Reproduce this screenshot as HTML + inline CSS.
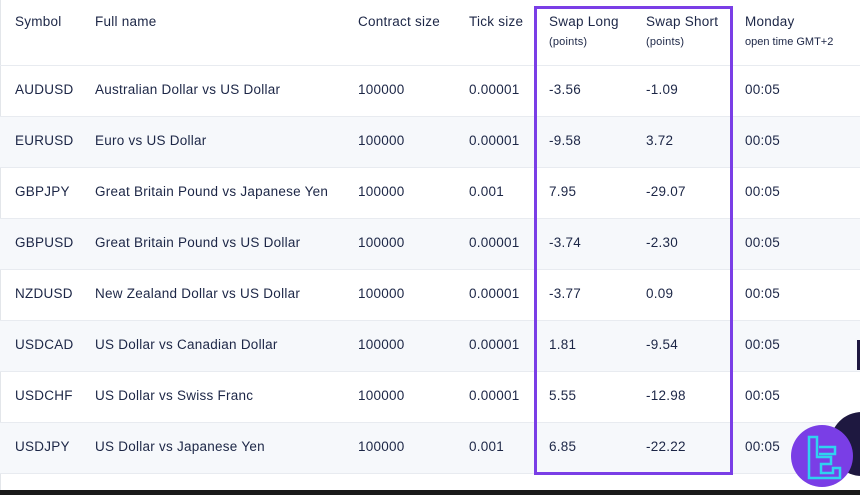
<!DOCTYPE html>
<html><head><style>
body{margin:0;width:860px;height:495px;overflow:hidden;background:#fff;font-family:"Liberation Sans",sans-serif;color:#1c2646;position:relative}
.r{position:absolute;left:0;width:860px;height:51px;border-top:1px solid #e8ebf0}
.r.a{background:#f6f8fb}
.t{position:absolute;font-size:13.5px;letter-spacing:0.25px;white-space:nowrap}
.s{font-size:11px;letter-spacing:0.2px}
</style></head><body>
<div style="position:absolute;left:0;top:0;width:1px;height:490px;background:#e3e6ea"></div>
<div class="t" style="left:15px;top:14px">Symbol</div>
<div class="t" style="left:95px;top:14px">Full name</div>
<div class="t" style="left:358px;top:14px">Contract size</div>
<div class="t" style="left:469px;top:14px">Tick size</div>
<div class="t" style="left:549px;top:14px">Swap Long</div>
<div class="t s" style="left:549px;top:36px">(points)</div>
<div class="t" style="left:646px;top:14px">Swap Short</div>
<div class="t s" style="left:646px;top:36px">(points)</div>
<div class="t" style="left:745px;top:14px">Monday</div>
<div class="t s" style="left:745px;top:36px;letter-spacing:0">open time GMT+2</div>
<div id="rows"></div>
<script>
var d=[["AUDUSD","Australian Dollar vs US Dollar","0.00001","-3.56","-1.09"],["EURUSD","Euro vs US Dollar","0.00001","-9.58","3.72"],["GBPJPY","Great Britain Pound vs Japanese Yen","0.001","7.95","-29.07"],["GBPUSD","Great Britain Pound vs US Dollar","0.00001","-3.74","-2.30"],["NZDUSD","New Zealand Dollar vs US Dollar","0.00001","-3.77","0.09"],["USDCAD","US Dollar vs Canadian Dollar","0.00001","1.81","-9.54"],["USDCHF","US Dollar vs Swiss Franc","0.00001","5.55","-12.98"],["USDJPY","US Dollar vs Japanese Yen","0.001","6.85","-22.22"]];
var h="";d.forEach(function(r,i){var y=65+i*51;h+='<div class="r'+(i%2?' a':'')+'" style="top:'+y+'px"></div>';var ty=y+17;var xs=[15,95,358,469,549,646,745];var v=[r[0],r[1],"100000",r[2],r[3],r[4],"00:05"];v.forEach(function(s,j){h+='<div class="t" style="left:'+xs[j]+'px;top:'+ty+'px">'+s+'</div>'})});
h+='<div class="r" style="top:473px;height:17px"></div>';
document.getElementById("rows").innerHTML=h;
</script>
<div style="position:absolute;left:534px;top:6px;width:193px;height:463px;border:3px solid #7a3ee6"></div>
<div style="position:absolute;left:0;top:490px;width:860px;height:5px;background:#1a1a1a"></div>
<div style="position:absolute;left:830px;top:412px;width:64px;height:64px;border-radius:50%;background:#1e1840"></div>
<div style="position:absolute;left:857px;top:340px;width:3px;height:30px;background:#1e1840"></div>
<svg style="position:absolute;left:791px;top:425px" width="62" height="62" viewBox="0 0 62 62">
<circle cx="31" cy="31" r="31" fill="#7a3ee6"/>
<path d="M18 12h8v20h14v7h-10v9h12v-5h7v10h-31z" fill="none" stroke="#2fd3f0" stroke-width="2.5"/>
<path d="M28 22h16v7h-16" fill="none" stroke="#2fd3f0" stroke-width="2.5"/>
</svg>
</body></html>
